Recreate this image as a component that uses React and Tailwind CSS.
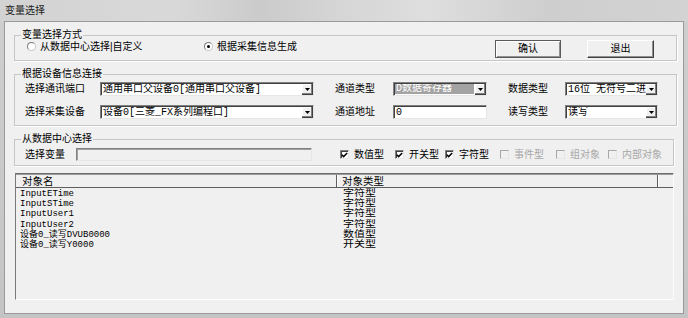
import React from "react";

function Arrow() {
  return (
    <svg width="5" height="3" viewBox="0 0 5 3" className="block">
      <polygon points="0,0 5,0 2.5,3" fill="#000" />
    </svg>
  );
}

function DropBtn() {
  return (
    <div className="w-[11px] h-full shrink-0 flex items-center justify-center bg-[#f0f0f0] border-r border-b border-r-[#404040] border-b-[#404040] shadow-[inset_-1px_-1px_0_#808080,inset_1px_1px_0_#ffffff]">
      <Arrow />
    </div>
  );
}

function Combo({ w, children, highlight, noBtn }) {
  return (
    <div
      className={`${w} h-[14px] shrink-0 flex pt-[1px] pl-[1px] bg-white border border-t-[#808080] border-l-[#808080] border-r-[#e6e6e6] border-b-[#e6e6e6] shadow-[inset_1px_1px_0_#404040]`}
    >
      {highlight ? (
        <div className="flex-1 min-w-0 overflow-hidden whitespace-nowrap mr-[1px] mb-[1px] bg-[#a3a3a3] text-white pl-[1px] leading-[10px] text-[10px] [font-family:'Liberation_Mono','Noto_Sans_CJK_SC',monospace]">
          {children}
        </div>
      ) : (
        <div className="flex-1 min-w-0 overflow-hidden whitespace-nowrap pl-[1px] leading-[11px] text-[10px] [font-family:'Liberation_Mono','Noto_Sans_CJK_SC',monospace]">
          {children}
        </div>
      )}
      {!noBtn && <DropBtn />}
    </div>
  );
}

function Radio({ checked }) {
  return (
    <div className="w-[9px] h-[9px] shrink-0 rounded-full border border-t-[#7a7a7a] border-l-[#7a7a7a] border-r-[#c8c8c8] border-b-[#c8c8c8] bg-white flex items-center justify-center">
      {checked && <div className="w-[3px] h-[3px] rounded-full bg-black" />}
    </div>
  );
}

function Check({ checked, disabled }) {
  return (
    <div
      className={
        disabled
          ? "w-[9px] h-[9px] shrink-0 border border-t-[#a8a8a8] border-l-[#a8a8a8] border-r-[#e6e6e6] border-b-[#e6e6e6] bg-[#f0f0f0]"
          : "w-[9px] h-[9px] shrink-0 border border-t-[#808080] border-l-[#808080] border-r-[#e6e6e6] border-b-[#e6e6e6] bg-white shadow-[inset_1px_1px_0_#404040] flex items-center justify-center"
      }
    >
      {checked && (
        <svg width="7" height="6" viewBox="0 0 7 6" className="block">
          <polyline points="0.8,2.8 2.6,4.6 6.2,1" fill="none" stroke="#000" strokeWidth="1.5" />
        </svg>
      )}
    </div>
  );
}

function CheckItem({ w, label, checked, disabled }) {
  return (
    <div className={`${w} shrink-0 flex items-center gap-[5px]`}>
      <Check checked={checked} disabled={disabled} />
      <span className={disabled ? "leading-[12px] text-[#a6a6a6]" : "leading-[12px] text-black"}>{label}</span>
    </div>
  );
}

const rows = [
  ["InputETime", "字符型"],
  ["InputSTime", "字符型"],
  ["InputUser1", "字符型"],
  ["InputUser2", "字符型"],
  ["设备0_读写DVUB0000", "数值型"],
  ["设备0_读写Y0000", "开关型"],
];

export default function App() {
  return (
    <div className="w-[688px] h-[318px] flex flex-col bg-[linear-gradient(180deg,#cfcfcf_0%,#c4c4c4_100%)] overflow-hidden text-black text-[10px] [font-family:'Liberation_Sans','Noto_Sans_CJK_SC',sans-serif]">
      {/* title bar */}
      <div className="h-[21px] shrink-0 flex items-center pl-[5px] bg-[linear-gradient(90deg,#d2d2d2_0%,#d9d9d9_25%,#cbcbcb_38%,#d6d6d6_50%,#dedede_62%,#cecece_80%,#d3d3d3_100%)]">
        <span className="leading-[12px] text-[#1c1c1c] pt-[1px]">变量选择</span>
      </div>

      {/* content */}
      <div className="flex-1 mx-[4px] mb-[4px] border border-[#9a9a9a] bg-[#f0f0f0] flex flex-col">
        {/* group 1 */}
        <fieldset className="ml-[9px] mt-[8px] w-[663px] border border-[#c6c6c6] shadow-[1px_1px_0_#ffffff] pb-[2px]">
          <legend className="ml-[6px] px-[1px] leading-[10px]">变量选择方式</legend>
          <div className="flex items-start h-[18px] pl-[12px] pr-[22px]">
            <div className="w-[177px] h-[13px] flex items-center gap-[4px]">
              <Radio />
              <span className="leading-[12px]">从数据中心选择|自定义</span>
            </div>
            <div className="h-[13px] flex items-center gap-[4px]">
              <Radio checked />
              <span className="leading-[12px]">根据采集信息生成</span>
            </div>
            <div className="ml-auto flex gap-[26px]">
              <div className="w-[66px] h-[18px] flex items-center justify-center bg-[#f0f0f0] border border-[#5a5a5a] shadow-[inset_1px_1px_0_#ffffff,inset_-1px_-1px_0_#909090]">
                <span className="leading-[12px]">确认</span>
              </div>
              <div className="w-[67px] h-[18px] flex items-center justify-center bg-[#f0f0f0] border border-t-[#ffffff] border-l-[#ffffff] border-r-[#404040] border-b-[#404040] shadow-[inset_-1px_-1px_0_#909090]">
                <span className="leading-[12px]">退出</span>
              </div>
            </div>
          </div>
        </fieldset>

        {/* group 2 */}
        <fieldset className="ml-[9px] mt-[8px] w-[663px] border border-[#c6c6c6] shadow-[1px_1px_0_#ffffff] pt-[3px] pb-[6px]">
          <legend className="ml-[6px] px-[1px] leading-[10px]">根据设备信息连接</legend>
          <div className="flex flex-col gap-[9px] pl-[10px]">
            <div className="flex items-center h-[14px]">
              <span className="w-[75px] shrink-0 leading-[12px]">选择通讯端口</span>
              <Combo w="w-[214px]">通用串口父设备0[通用串口父设备]</Combo>
              <span className="ml-[21px] w-[58px] shrink-0 leading-[12px]">通道类型</span>
              <Combo w="w-[94px]" highlight>D数据寄存器</Combo>
              <span className="ml-[21px] w-[57px] shrink-0 leading-[12px]">数据类型</span>
              <Combo w="w-[93px]">16位 无符号二进</Combo>
            </div>
            <div className="flex items-center h-[14px]">
              <span className="w-[75px] shrink-0 leading-[12px]">选择采集设备</span>
              <Combo w="w-[214px]">设备0[三菱_FX系列编程口]</Combo>
              <span className="ml-[21px] w-[58px] shrink-0 leading-[12px]">通道地址</span>
              <Combo w="w-[94px]" noBtn>0</Combo>
              <span className="ml-[21px] w-[57px] shrink-0 leading-[12px]">读写类型</span>
              <Combo w="w-[93px]">读写</Combo>
            </div>
          </div>
        </fieldset>

        {/* group 3 */}
        <fieldset className="ml-[9px] mt-[8px] w-[660px] border border-[#c6c6c6] shadow-[1px_1px_0_#ffffff] pt-[4px] pb-[4px]">
          <legend className="ml-[6px] px-[1px] leading-[10px]">从数据中心选择</legend>
          <div className="flex items-center h-[13px] pl-[10px]">
            <span className="w-[51px] shrink-0 leading-[12px]">选择变量</span>
            <div className="w-[236px] h-[13px] shrink-0 bg-[#f0f0f0] border border-t-[#808080] border-l-[#808080] border-r-[#e6e6e6] border-b-[#e6e6e6] shadow-[inset_1px_1px_0_#a0a0a0]" />
            <div className="ml-[28px] flex items-center">
              <CheckItem w="w-[55px]" label="数值型" checked />
              <CheckItem w="w-[50px]" label="开关型" checked />
              <CheckItem w="w-[55px]" label="字符型" checked />
              <CheckItem w="w-[56px]" label="事件型" disabled />
              <CheckItem w="w-[52px]" label="组对象" disabled />
              <CheckItem w="w-[56px]" label="内部对象" disabled />
            </div>
          </div>
        </fieldset>

        {/* list */}
        <div className="ml-[10px] mt-[7px] w-[659px] h-[127px] border border-t-[#6e6e6e] border-l-[#7a7a7a] border-r-[#fcfcfc] border-b-[#fcfcfc] flex flex-col">
          <div className="h-[14px] shrink-0 flex border-t border-t-[#9a9a9a] border-b border-b-[#5e5e5e]">
            <div className="w-[321px] shrink-0 pl-[6px] flex items-center border-r border-r-[#5e5e5e]">
              <span className="leading-[11px] text-[10.5px]">对象名</span>
            </div>
            <div className="w-[321px] shrink-0 pl-[5px] flex items-center border-r border-r-[#5e5e5e] shadow-[inset_1px_0_0_#ffffff]">
              <span className="leading-[11px] text-[10.5px]">对象类型</span>
            </div>
            <div className="flex-1 shadow-[inset_1px_0_0_#ffffff]" />
          </div>
          <div className="mt-[1px] flex flex-col">
            {rows.map(([a, b]) => (
              <div key={a} className="flex h-[10.2px] items-center">
                <div className="w-[327px] shrink-0 pl-[4px] whitespace-nowrap leading-[10px] text-[9px] [font-family:'Liberation_Mono','Noto_Sans_CJK_SC',monospace]">
                  {a}
                </div>
                <div className="whitespace-nowrap leading-[10px] text-[9px] origin-left scale-x-[1.22] [font-family:'Liberation_Mono','Noto_Sans_CJK_SC',monospace]">
                  {b}
                </div>
              </div>
            ))}
          </div>
        </div>
      </div>
    </div>
  );
}
